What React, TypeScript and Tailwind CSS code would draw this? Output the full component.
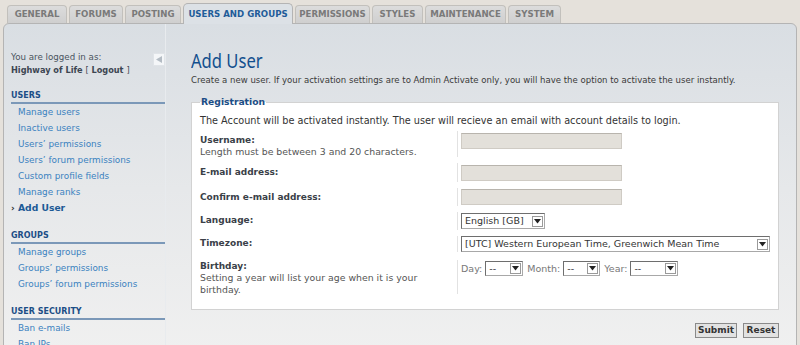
import React from "react";

const tabs: { label: string; w: number; active?: boolean }[] = [
  { label: "GENERAL", w: 60 },
  { label: "FORUMS", w: 54 },
  { label: "POSTING", w: 56 },
  { label: "USERS AND GROUPS", w: 110, active: true },
  { label: "PERMISSIONS", w: 75 },
  { label: "STYLES", w: 51 },
  { label: "MAINTENANCE", w: 81 },
  { label: "SYSTEM", w: 53 },
];

function Arrow() {
  return (
    <div className="w-[11px] h-[11px] bg-white border border-[#9a9a9a] flex items-center justify-center shrink-0">
      <svg width="7" height="5" viewBox="0 0 7 5">
        <path d="M0 0 L7 0 L3.5 4.5 Z" fill="#222" />
      </svg>
    </div>
  );
}

function Select({ w, h, text }: { w: number; h: number; text: string }) {
  return (
    <div
      className="flex items-center bg-white border border-[#a8a8a8] border-t-[#6e6e6e] border-l-[#6e6e6e] pl-[3px] pr-[1px] text-[#333] text-[9.5px]"
      style={{ width: w, height: h }}
    >
      <span className="flex-1 whitespace-nowrap overflow-hidden">{text}</span>
      <Arrow />
    </div>
  );
}

function Input() {
  return <div className="w-[161px] h-[16px] bg-[#e3e0da] border border-[#cfcbc4] border-t-[#b8b4ad]" />;
}

function SideHead({ children, first }: { children: React.ReactNode; first?: boolean }) {
  return (
    <div
      className={
        (first ? "mt-[13px] " : "mt-[14px] ") +
        "border-b-2 border-[#7b98b8] text-[8px] font-bold text-[#1c4e86] leading-[11px] pb-[1px]"
      }
    >
      {children}
    </div>
  );
}

function SideLink({ children, active }: { children: React.ReactNode; active?: boolean }) {
  return (
    <div
      className={
        "h-[16px] leading-[16px] pl-[7px] whitespace-nowrap relative " +
        (active ? "font-bold text-[#1c5a96] text-[9.2px]" : "text-[#3a82c0] text-[8.85px]")
      }
    >
      {active && <span className="absolute left-[0px] top-0 text-[#333] text-[9px] font-bold">›</span>}
      {children}
    </div>
  );
}

export default function App() {
  const font = { fontFamily: '"DejaVu Sans", Verdana, sans-serif' };
  const label = "w-[257px] shrink-0 text-[9px] leading-[12px] font-bold text-[#3a3f48]";
  return (
    <div className="w-[800px] h-[345px] overflow-hidden bg-[#e5e1db]" style={font}>
      {/* tabs */}
      <div className="flex items-end gap-[2px] pl-[7px] h-[23px]">
        {tabs.map((t) =>
          t.active ? (
            <div
              key={t.label}
              className="h-[21px] -mb-[1px] relative z-10 rounded-t-[5px] border border-b-0 border-[#b4b4b4] bg-[#dce1e6] flex items-center justify-center text-[8.6px] font-bold text-[#1f5c99]"
              style={{ width: t.w }}
            >
              {t.label}
            </div>
          ) : (
            <div
              key={t.label}
              className="h-[18px] rounded-t-[4px] border border-b-0 border-[#c2c0bc] bg-gradient-to-b from-[#dcdcdc] to-[#cfcfcf] flex items-center justify-center text-[8.6px] font-bold text-[#7a7a7a]"
              style={{ width: t.w }}
            >
              {t.label}
            </div>
          )
        )}
      </div>
      {/* panel */}
      <div className="mx-[3px] h-[330px] rounded-t-[6px] border border-[#b4b4b4] bg-gradient-to-b from-[#d9dee3] via-[#e6e8ea] to-[#f0f0f0] flex">
        {/* sidebar */}
        <div className="w-[162px] shrink-0 border-r border-[#e8ebee] pl-[7px] pt-[27px] relative">
          <div className="absolute right-[0px] top-[29px] w-[12px] h-[13px] bg-[#f4f6f8] border border-[#e0e4e8] flex items-center justify-center">
            <svg width="6" height="7" viewBox="0 0 6 7">
              <path d="M6 0 L6 7 L0 3.5 Z" fill="#b4bcc4" />
            </svg>
          </div>
          <div className="text-[8.7px] leading-[13px] text-[#4a5460]">You are logged in as:</div>
          <div className="text-[8.2px] leading-[13px] text-[#3c4652] font-bold whitespace-nowrap">
            Highway of Life <span className="font-normal">[</span> Logout <span className="font-normal">]</span>
          </div>
          <SideHead first>USERS</SideHead>
          <SideLink>Manage users</SideLink>
          <SideLink>Inactive users</SideLink>
          <SideLink>Users’ permissions</SideLink>
          <SideLink>Users’ forum permissions</SideLink>
          <SideLink>Custom profile fields</SideLink>
          <SideLink>Manage ranks</SideLink>
          <SideLink active>Add User</SideLink>
          <SideHead>GROUPS</SideHead>
          <SideLink>Manage groups</SideLink>
          <SideLink>Groups’ permissions</SideLink>
          <SideLink>Groups’ forum permissions</SideLink>
          <SideHead>USER SECURITY</SideHead>
          <SideLink>Ban e-mails</SideLink>
          <SideLink>Ban IPs</SideLink>
        </div>
        {/* content */}
        <div className="flex-1 pl-[25px] pr-[17px] pt-[24px]">
          <div
            className="text-[20px] leading-[26px] text-[#124f8e] origin-left scale-x-[0.83]"
            style={{ fontFamily: '"Noto Sans", "DejaVu Sans", sans-serif' }}
          >
            Add User
          </div>
          <div className="text-[8.55px] leading-[12px] text-[#3a3a3a] whitespace-nowrap">
            Create a new user. If your activation settings are to Admin Activate only, you will have the option to activate the user instantly.
          </div>
          <fieldset className="mt-[10px] border border-[#d2d2d2] bg-white pl-[8px] h-[214px]">
            <legend className="text-[9.2px] font-bold text-[#1c4e86] leading-[12px] px-[1px]">Registration</legend>
            <div className="mt-[7px] text-[9.7px] leading-[12px] text-[#333] whitespace-nowrap">
              The Account will be activated instantly. The user will recieve an email with account details to login.
            </div>
            {/* username */}
            <div className="flex mt-[4px] h-[26px]">
              <div className="w-[257px] shrink-0 pt-[3px] text-[9.35px] leading-[12px]">
                <div className="font-bold text-[9px] text-[#3a3f48]">Username:</div>
                <div className="text-[#555]">Length must be between 3 and 20 characters.</div>
              </div>
              <div className="border-l border-[#e2e2e2] pl-[3px] pt-[2px]">
                <Input />
              </div>
            </div>
            {/* email */}
            <div className="flex mt-[6px] h-[19px]">
              <div className={label + " pt-[3px]"}>E-mail address:</div>
              <div className="border-l border-[#e2e2e2] pl-[3px] pt-[2px]">
                <Input />
              </div>
            </div>
            {/* confirm */}
            <div className="flex mt-[6px] h-[18px]">
              <div className={label + " pt-[3px]"}>Confirm e-mail address:</div>
              <div className="border-l border-[#e2e2e2] pl-[3px] pt-[1px]">
                <Input />
              </div>
            </div>
            {/* language */}
            <div className="flex mt-[6px] h-[18px]">
              <div className={label + " pt-[2px]"}>Language:</div>
              <div className="border-l border-[#e2e2e2] pl-[3px] pt-[1px]">
                <Select w={84} h={16} text="English [GB]" />
              </div>
            </div>
            {/* timezone */}
            <div className="flex mt-[6px] h-[16px]">
              <div className={label + " pt-[1px]"}>Timezone:</div>
              <div className="border-l border-[#e2e2e2] pl-[3px]">
                <Select w={309} h={16} text="[UTC] Western European Time, Greenwich Mean Time" />
              </div>
            </div>
            {/* birthday */}
            <div className="flex mt-[8px] h-[34px]">
              <div className="w-[257px] shrink-0 text-[9.35px] leading-[12px] text-[#555]">
                <div className="font-bold text-[9px] text-[#3a3f48]">Birthday:</div>
                <div>Setting a year will list your age when it is your</div>
                <div>birthday.</div>
              </div>
              <div className="border-l border-[#e2e2e2] pl-[3px] pt-[1px] flex items-start gap-[3px] text-[9.5px] text-[#777] leading-[15px]">
                <span>Day:</span>
                <Select w={38} h={15} text="--" />
                <span className="ml-[1px]">Month:</span>
                <Select w={37} h={15} text="--" />
                <span className="ml-[1px]">Year:</span>
                <Select w={48} h={15} text="--" />
              </div>
            </div>
          </fieldset>
          <div className="flex justify-end gap-[6px] mt-[13px]">
            <div className="w-[42px] h-[15px] bg-[#e2e2e2] border border-[#8a8a8a] flex items-center justify-center text-[9px] font-bold text-[#333]">Submit</div>
            <div className="w-[36px] h-[15px] bg-[#e2e2e2] border border-[#8a8a8a] flex items-center justify-center text-[9px] font-bold text-[#333]">Reset</div>
          </div>
        </div>
      </div>
    </div>
  );
}
